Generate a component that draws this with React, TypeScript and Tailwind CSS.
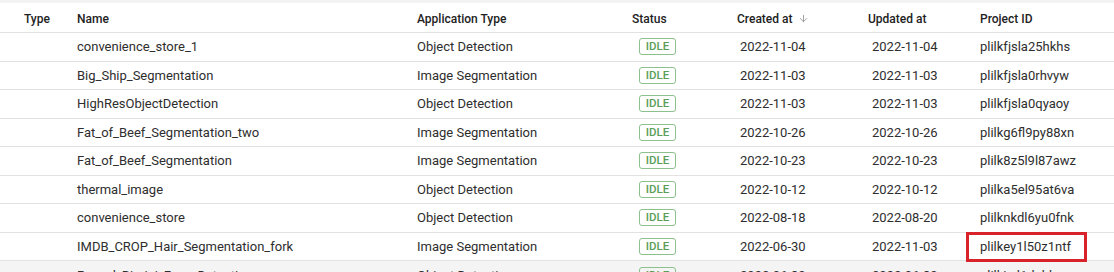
import { ArrowDown } from "lucide-react";

type Project = {
  name: string;
  appType: string;
  created: string;
  updated: string;
  id: string;
  marked?: boolean;
};

const projects: Project[] = [
  { name: "convenience_store_1", appType: "Object Detection", created: "2022-11-04", updated: "2022-11-04", id: "plilkfjsla25hkhs" },
  { name: "Big_Ship_Segmentation", appType: "Image Segmentation", created: "2022-11-03", updated: "2022-11-03", id: "plilkfjsla0rhvyw" },
  { name: "HighResObjectDetection", appType: "Object Detection", created: "2022-11-03", updated: "2022-11-03", id: "plilkfjsla0qyaoy" },
  { name: "Fat_of_Beef_Segmentation_two", appType: "Image Segmentation", created: "2022-10-26", updated: "2022-10-26", id: "plilkg6fl9py88xn" },
  { name: "Fat_of_Beef_Segmentation", appType: "Image Segmentation", created: "2022-10-23", updated: "2022-10-23", id: "plilk8z5l9l87awz" },
  { name: "thermal_image", appType: "Object Detection", created: "2022-10-12", updated: "2022-10-12", id: "plilka5el95at6va" },
  { name: "convenience_store", appType: "Object Detection", created: "2022-08-18", updated: "2022-08-20", id: "plilknkdl6yu0fnk" },
  { name: "IMDB_CROP_Hair_Segmentation_fork", appType: "Image Segmentation", created: "2022-06-30", updated: "2022-11-03", id: "plilkey1l50z1ntf", marked: true },
];

const cols = "grid grid-cols-[77px_340px_215px_105px_131px_112px_1fr]";

function IdleBadge() {
  return (
    <span className="ml-[7px] inline-flex h-[17px] w-[37px] items-center justify-center rounded-[3px] border border-[#8cc08c] text-[11.5px] font-medium leading-none text-[#5a9e5a]">
      IDLE
    </span>
  );
}

export default function App() {
  return (
    <div className="h-[272px] w-[1114px] overflow-hidden bg-white font-['Roboto',sans-serif] text-[13px] text-[#2e2e2e]">
      <div className="h-[3px] bg-[#f3f3f3]" />

      {/* Header */}
      <div className={`${cols} h-[30px] items-center border-b border-[#e2e2e2] pt-[2px] text-[12px] font-medium text-[#222]`}>
        <div className="pl-[24px]">Type</div>
        <div>Name</div>
        <div>Application Type</div>
        <div>Status</div>
        <div className="flex items-center gap-[5px]">
          Created at
          <ArrowDown size={11} strokeWidth={2} className="text-[#999]" />
        </div>
        <div>Updated at</div>
        <div>Project ID</div>
      </div>

      {projects.map((p) => (
        <div key={p.id} className={`${cols} h-[28.5px] items-center border-b border-[#e2e2e2]`}>
          <div />
          <div>{p.name}</div>
          <div>{p.appType}</div>
          <div className="flex">
            <IdleBadge />
          </div>
          <div className="pl-[3px]">{p.created}</div>
          <div className="pl-[4px]">{p.updated}</div>
          <div className="relative flex h-full items-center">
            {p.marked && (
              <div className="absolute -left-[14px] top-[-1px] h-[30px] w-[121px] border-[3px] border-[#d8232a]" />
            )}
            {p.id}
          </div>
        </div>
      ))}

      {/* partially visible hovered row */}
      <div className={`${cols} h-[28.5px] items-center bg-[#f4f4f4]`}>
        <div />
        <div>Pascal_Bimini_Face_Detection</div>
        <div>Object Detection</div>
        <div className="flex">
          <IdleBadge />
        </div>
        <div className="pl-[3px]">2022-06-30</div>
        <div className="pl-[4px]">2022-06-30</div>
        <div>plilkiyd1dabk</div>
      </div>
    </div>
  );
}
